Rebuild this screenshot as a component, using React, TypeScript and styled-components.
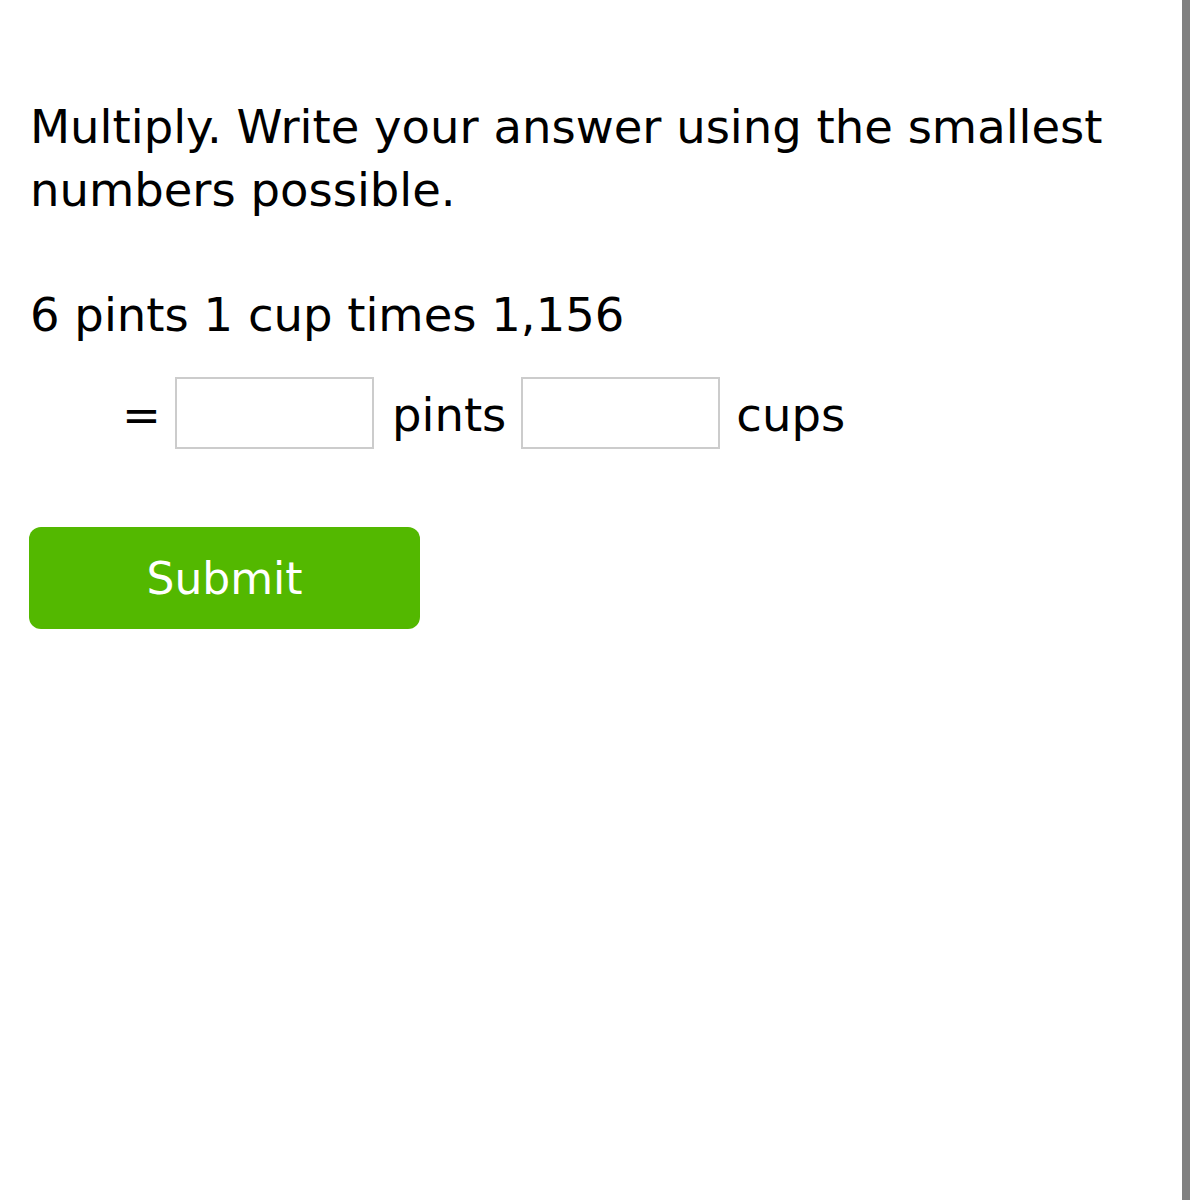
import React from "react";
import styled, { createGlobalStyle } from "styled-components";

const Global = createGlobalStyle`
  html, body { margin: 0; padding: 0; background: #fff; }
  body { font-family: "DejaVu Sans", Verdana, sans-serif; color: #000; }
`;

const Frame = styled.div`
  width: 1190px;
  min-height: 1200px;
  box-sizing: border-box;
  border-right: 8px solid #808080;
  padding: 96px 0 0 30px;
`;

const Prompt = styled.p`
  margin: 0;
  font-size: 46.5px;
  line-height: 63px;
  width: 1130px;
`;

const Problem = styled.p`
  margin: 62px 0 0 0;
  font-size: 46.5px;
  line-height: 63px;
`;

const EquationRow = styled.div`
  display: flex;
  align-items: center;
  margin: 30px 0 0 90px;
  font-size: 46.5px;
`;

const Word = styled.span<{ $left: number; $right: number }>`
  margin: 4px ${(p) => p.$right}px 0 ${(p) => p.$left}px;
  line-height: 1;
`;

const AnswerBox = styled.input`
  width: 199px;
  height: 72px;
  box-sizing: border-box;
  border: 2px solid #cccccc;
  background: #fff;
  font-size: 40px;
  font-family: inherit;
  padding: 0 8px;
  outline: none;
`;

const SubmitButton = styled.button`
  display: flex;
  align-items: center;
  justify-content: center;
  margin: 78px 0 0 -1px;
  width: 391px;
  height: 102px;
  border: none;
  border-radius: 12px;
  background: #53b800;
  color: #fff;
  font-family: "DejaVu Sans", Verdana, sans-serif;
  font-size: 44px;
  cursor: pointer;
`;

export default function App() {
  return (
    <>
      <Global />
      <Frame>
        <Prompt>Multiply. Write your answer using the smallest numbers possible.</Prompt>
        <Problem>6 pints 1 cup times 1,156</Problem>
        <EquationRow>
          <Word $left={2} $right={14}>=</Word>
          <AnswerBox aria-label="pints" />
          <Word $left={18} $right={15}>pints</Word>
          <AnswerBox aria-label="cups" />
          <Word $left={16} $right={0}>cups</Word>
        </EquationRow>
        <SubmitButton>Submit</SubmitButton>
      </Frame>
    </>
  );
}
